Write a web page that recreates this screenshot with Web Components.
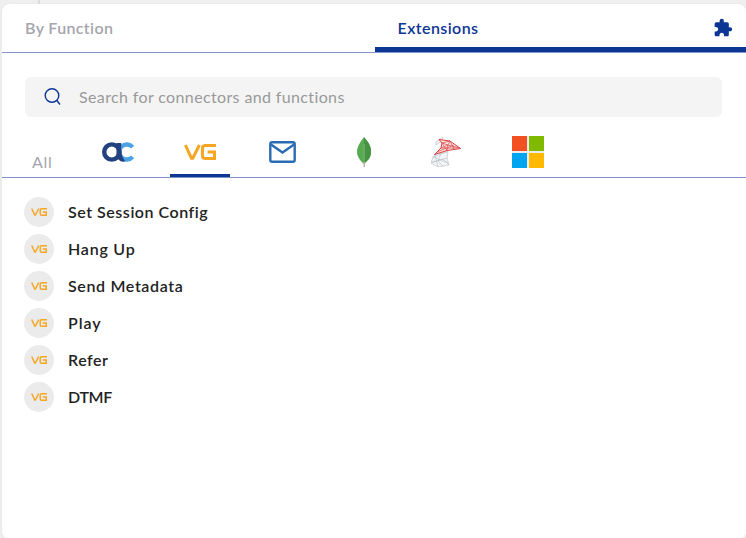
<!DOCTYPE html>
<html lang="en">
<head>
<meta charset="utf-8">
<title>Extensions</title>
<style>
body{margin:0;width:746px;height:538px;overflow:hidden;background:#efefef;font-family:Lato,"Open Sans",sans-serif;font-size:16px}
</style>
</head>
<body>
<extension-panel></extension-panel>
<script>
const vg='<path d="M1.4 1 7.4 14.2H8.8L15.4 1M32 1.5H21.4Q18.4 1.5 18.4 4.5V11.5Q18.4 14.5 21.4 14.5H30.5V8H23.6" fill="none" stroke="#f5a623" stroke-width="3"/>';
const icons={
search:['0 0 18 18','<g fill="none" stroke="#0b3694" stroke-width="1.4"><circle cx="8" cy="7.500" r="6.800"/><path d="m12.700 12.300 3.300 4.200"/></g>'],
puzzle:['0 0 24 24','<path fill="#0b3694" d="M20.5 11H19V7c0-1.100-.9-2-2-2h-4V3.500C13 2.120 11.880 1 10.500 1S8 2.120 8 3.500V5H4c-1.100 0-2 .9-2 2v3.800h1.500c1.500 0 2.700 1.200 2.700 2.700S5 16.200 3.500 16.200H2V20c0 1.100.9 2 2 2h3.800v-1.500c0-1.500 1.200-2.700 2.700-2.700s2.700 1.200 2.700 2.700V22H17c1.100 0 2-.9 2-2v-4h1.500c1.380 0 2.500-1.120 2.500-2.500S21.880 11 20.500 11z"/>'],
vg:['0 0 32 16',vg],
ac:['0 0 32 20','<path d="M30.600 5.200A7.500 7.500 0 1 0 30.600 14.800" fill="none" stroke="#4ba3e3" stroke-width="4.300"/><circle cx="9.800" cy="10" r="7.600" fill="none" stroke="#23417f" stroke-width="4.400"/><path d="M14.500 1H19.300C18.800 8 19 15.500 23.800 19.300 18.500 20.600 15.500 18 14.500 13Z" fill="#23417f"/>'],
mail:['0 0 27 22','<g fill="none" stroke="#2a6cb4" stroke-width="2.400"><rect x="1.300" y="1.300" width="24.400" height="19.400" rx="1.800"/><path d="m2 3.500 11.500 8 11.500-8"/></g>'],
leaf:['0 0 14 30','<path d="M7 0C9 3 14 7 14 14.500S9.500 24 7.500 26.500H6.500C4 24 0 20.500 0 14.500S5 3 7 0Z" fill="#58aa50"/><path d="M7 0C9 3 14 7 14 14.500S9.500 24 7.500 26.500H7Z" fill="#459344"/><path d="M7.200 7V25" stroke="#86bd72" stroke-width=".8"/><path d="M7.200 25V30" stroke="#b9aa99" stroke-width="1.300"/>'],
sql:['0 0 30 30','<g fill="none" stroke-linejoin="round"><g stroke="#bcc5cc" stroke-width=".7"><path fill="#eef1f3" d="M5 5 12 0 11 4 5 8Z"/><path fill="#f3f5f6" d="M4.500 17 17 14.500 16 21 18 28 7 30 0 26 2 20Z"/><path d="M1 25 16 21M4 18 7 30M2 20 17 26M10 16 7 24 12 29M17 14.500 2 20M0 26 12 22 18 28"/></g><path fill="#fbeaea" stroke="#e03c3c" stroke-width="1" d="M8 2.500 19 4 29.500 11.500 16 13.500 3.500 17.500 10 11 11 6Z"/><path d="M11 6 19 4 17 8 29 11 10 11 17 8 11 6M17 8 16 13.500M11 6 16 13.500M19 4 23 12M6 15 23 8" stroke="#e05252" stroke-width=".8"/></g>'],
windows:['0 0 32 32','<path fill="#ececec" d="M15 0h2v32h-2zM0 15h32v2H0z"/><path fill="#f25022" d="M0 0h15v15H0z"/><path fill="#7fba00" d="M17 0h15v15H17z"/><path fill="#00a4ef" d="M0 17h15v15H0z"/><path fill="#ffb900" d="M17 17h15v15H17z"/>']
};
class Base extends HTMLElement{
  connectedCallback(){this.attachShadow({mode:'open'}).innerHTML=this.view();this.ready?.()}
  a(n){return this.getAttribute(n)}
}
customElements.define('ui-icon',class extends Base{
  view(){const [v,m]=icons[this.a('name')];return `<style>:host{display:block;flex:none;width:${this.a('w')}px;height:${this.a('h')}px}svg{display:block}</style><svg width="${this.a('w')}" height="${this.a('h')}" viewBox="${v}">${m}</svg>`}
});
/* Text label whose tracking is spread evenly to fill its nominal width. */
customElements.define('fit-label',class extends Base{
  view(){return `<style>:host{display:block;white-space:nowrap;line-height:20px}</style><span>${this.textContent}</span>`}
  ready(){const s=this.shadowRoot.querySelector('span');const n=s.textContent.length;s.style.letterSpacing=(this.a('w')-s.getBoundingClientRect().width)/n+'px'}
});
customElements.define('main-tab',class extends Base{
  view(){return `<style>:host{display:flex;flex:1;align-items:center;justify-content:space-between;box-sizing:border-box;height:48px;padding:0 13px 0 23px;color:#a5a5ad;font-weight:600}:host([active]){color:#0b3694;border-bottom:5px solid #0b3694;padding:5px 13px 0 22.500px}</style><slot></slot>`}
});
customElements.define('search-field',class extends Base{
  view(){return `<style>:host{display:flex;align-items:center;gap:17px;height:40px;margin:24px 24px 0 23px;padding-left:19px;border-radius:6px;background:#f4f4f4;color:#999;box-sizing:border-box}</style><ui-icon name="search" w="18" h="18"></ui-icon><fit-label w="266">Search for connectors and functions</fit-label>`}
});
customElements.define('connector-tab',class extends Base{
  view(){return `<style>:host{display:flex;align-items:center;justify-content:center;width:60px;height:47px;box-sizing:border-box;border-bottom:3px solid transparent}:host([active]){border-color:#0b3694}</style><slot></slot>`}
});
customElements.define('function-row',class extends Base{
  view(){return `<style>:host{display:flex;align-items:center;gap:14px;height:30px;color:#222;font-weight:600}.badge{display:flex;align-items:center;justify-content:center;width:30px;height:30px;border-radius:50%;background:#ebebeb}</style><div class="badge"><ui-icon name="vg" w="16" h="8"></ui-icon></div><fit-label w="${this.a('w')}">${this.a('name')}</fit-label>`}
});
customElements.define('extension-panel',class extends Base{
  view(){
    const tabs=[['ac',32,20],['vg',32,16],['mail',27,22],['leaf',14,30],['sql',30,30],['windows',32,32]];
    const rows=[['Set Session Config',140],['Hang Up',67.500],['Send Metadata',115.500],['Play',33.500],['Refer',40.500],['DTMF',44]];
    return `<style>
:host{display:block;height:538px;padding:4px 0 0 2px;box-sizing:border-box;background:linear-gradient(90deg,transparent 38px,#ddd 38px,#ddd 40px,transparent 40px) 0 0/100% 4px no-repeat}
.card{height:534px;background:#fff;border-radius:8px 8px 6px 6px;box-shadow:0 0 4px #0000000a}
.tabs{display:flex;border-bottom:1px solid #8094c8}
.connectors{display:flex;height:60px;box-sizing:content-box;border-bottom:1px solid #8094c8;align-items:flex-end}
.all{width:56px;padding:0 0 5px 30px;color:#a5a5ad}
.icons{display:flex;gap:22px}
.list{display:flex;flex-direction:column;gap:7px;padding:19px 22px}
</style><div class="card"><div class="tabs"><main-tab style="flex:0 0 373px"><fit-label w="88.500">By Function</fit-label></main-tab><main-tab active><fit-label w="81">Extensions</fit-label><ui-icon name="puzzle" w="20" h="20"></ui-icon></main-tab></div>
<search-field></search-field><div class="connectors"><div class="all"><fit-label w="20.500">All</fit-label></div><div class="icons">${tabs.map(([n,w,h])=>`<connector-tab ${n==='vg'?'active':''}><ui-icon name="${n}" w="${w}" h="${h}"></ui-icon></connector-tab>`).join('')}</div></div>
<div class="list">${rows.map(([n,w])=>`<function-row name="${n}" w="${w}"></function-row>`).join('')}</div></div>`}
});
</script>
</body>
</html>
